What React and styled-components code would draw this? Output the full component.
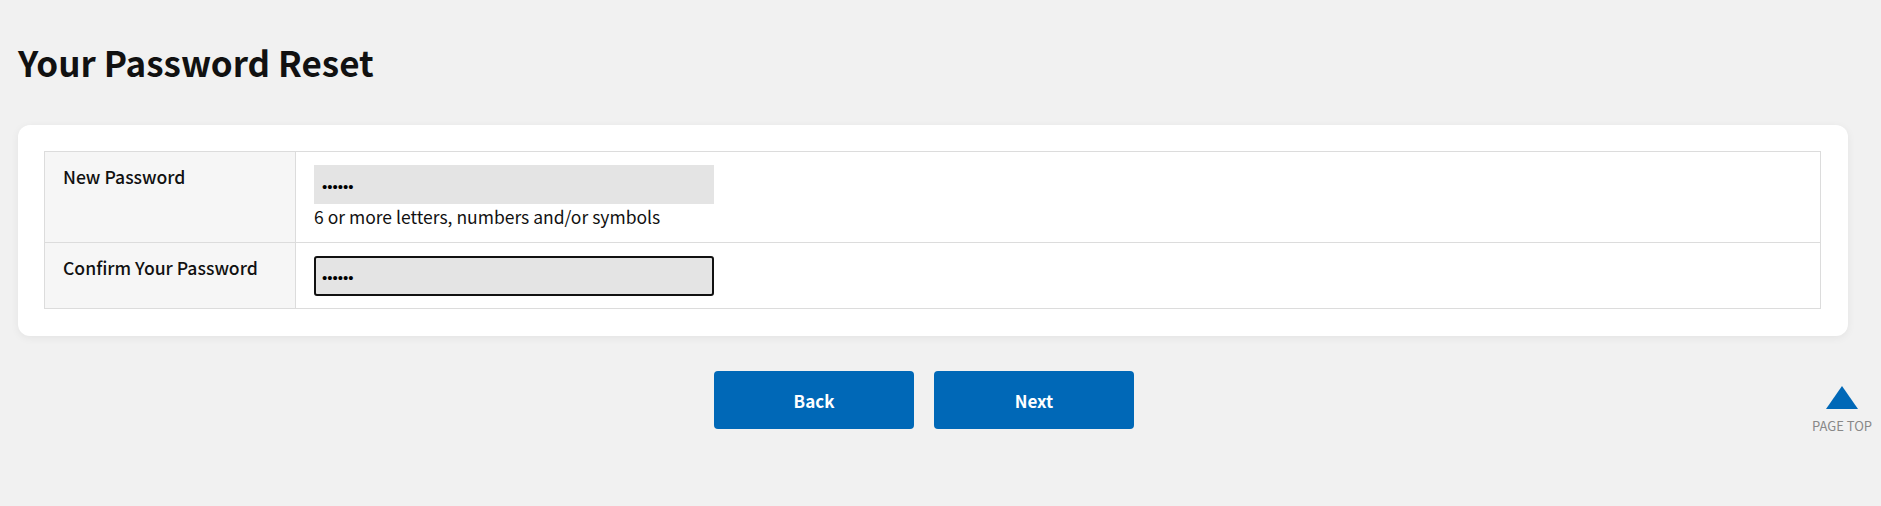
import React from 'react';
import styled, { createGlobalStyle } from 'styled-components';

const GlobalStyle = createGlobalStyle`
  html, body {
    margin: 0;
    padding: 0;
    background: #f1f1f1;
    overflow: hidden;
  }
  body {
    font-family: "Noto Sans CJK JP", "Noto Sans", sans-serif;
    color: #111;
  }
`;

const Page = styled.div`
  position: relative;
  height: 506px;
  box-sizing: border-box;
  padding: 32px 33px 0 18px;
`;

const Title = styled.h1`
  margin: 0;
  height: 60px;
  font-size: 35px;
  line-height: 60px;
  font-weight: 700;
  color: #111;
`;

const Card = styled.section`
  margin-top: 33px;
  padding: 26px 27px 27px 26px;
  border-radius: 12px;
  background: #fff;
  box-shadow: 0 2px 8px rgba(0, 0, 0, 0.06);
`;

const Form = styled.div`
  border: 1px solid #dcdcdc;
  border-bottom: none;
`;

const Row = styled.div`
  display: grid;
  grid-template-columns: 251px 1fr;
  border-bottom: 1px solid #dcdcdc;
`;

const Label = styled.div`
  padding: 10px 18px;
  background: #f6f6f6;
  border-right: 1px solid #dcdcdc;
  font-size: 17.6px;
  line-height: 30px;
  font-weight: 500;
`;

const Field = styled.div`
  padding: 13px 18px 12px;
  font-size: 17.5px;
  line-height: 25px;
  font-weight: 400;
`;

const PasswordInput = styled.input`
  display: block;
  box-sizing: border-box;
  width: 400px;
  height: ${(p) => (p.$focused ? '40px' : '39px')};
  padding: 3px 8px 0;
  border: ${(p) => (p.$focused ? '2px solid #111' : 'none')};
  border-radius: ${(p) => (p.$focused ? '3px' : '0')};
  padding-left: ${(p) => (p.$focused ? '6px' : '8px')};
  background: #e4e4e4;
  font-family: "Liberation Sans", sans-serif;
  font-size: 15px;
  color: #000;
  outline: none;
`;

const Hint = styled.div`
  margin-top: 0;
  padding-bottom: 1px;
`;

const Actions = styled.div`
  display: flex;
  justify-content: center;
  gap: 20px;
  margin-top: 35px;
  padding-right: 18px;
`;

const Button = styled.button`
  width: 200px;
  height: 58px;
  border: none;
  border-radius: 4px;
  background: #0068b7;
  color: #fff;
  font-family: inherit;
  font-size: 17px;
  font-weight: 700;
  cursor: pointer;
`;

const PageTop = styled.a`
  position: absolute;
  right: 9px;
  top: 386px;
  width: 60px;
  display: flex;
  flex-direction: column;
  align-items: center;
  color: #888;
  font-size: 13px;
  line-height: 20px;
  white-space: nowrap;
`;

const Arrow = styled.svg`
  display: block;
  margin-bottom: 7px;
`;

export default function App() {
  return (
    <Page>
      <GlobalStyle />
      <Title>Your Password Reset</Title>
      <Card>
        <Form>
          <Row>
            <Label>New Password</Label>
            <Field>
              <PasswordInput type="password" defaultValue="secret" readOnly />
              <Hint>6 or more letters, numbers and/or symbols</Hint>
            </Field>
          </Row>
          <Row>
            <Label>Confirm Your Password</Label>
            <Field>
              <PasswordInput $focused type="password" defaultValue="secret" readOnly />
            </Field>
          </Row>
        </Form>
      </Card>
      <Actions>
        <Button>Back</Button>
        <Button>Next</Button>
      </Actions>
      <PageTop>
        <Arrow width="32" height="23" viewBox="0 0 32 23">
          <polygon points="16,0 32,23 0,23" fill="#0068b7" />
        </Arrow>
        PAGE TOP
      </PageTop>
    </Page>
  );
}
